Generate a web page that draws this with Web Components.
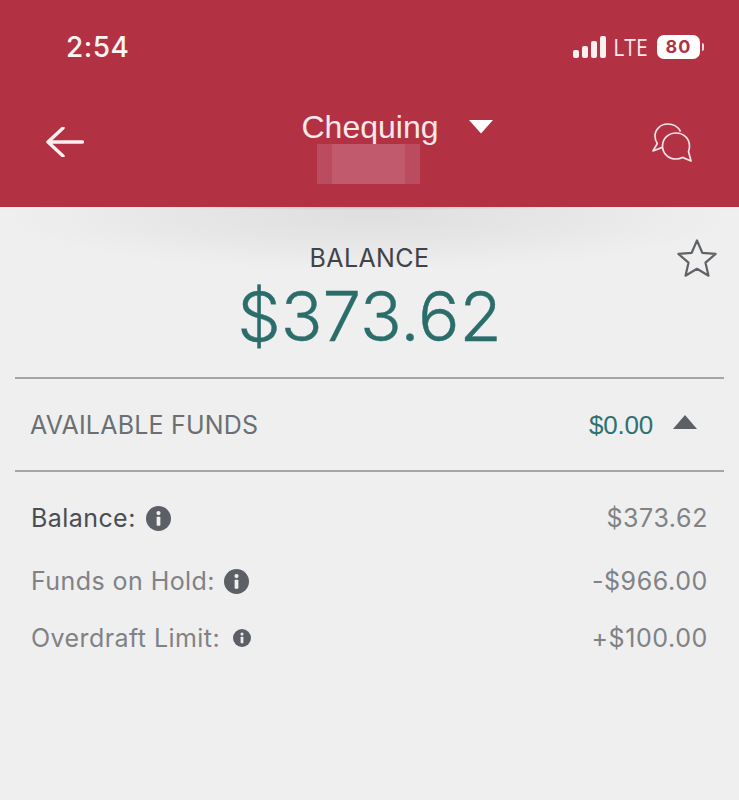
<!DOCTYPE html>
<html><head><meta charset="utf-8"><title>Chequing</title>
<style>html,body{margin:0;padding:0;background:#efeff0}body{width:739px;height:800px;overflow:hidden;font-family:"Liberation Sans",sans-serif}</style>
</head><body>
<account-screen></account-screen>
<script>
function def(name, html){
  customElements.define(name, class extends HTMLElement{
    constructor(){super();this.attachShadow({mode:'open'}).innerHTML=html;}
  });
}
def('status-bar',`<style>
:host{display:flex;align-items:center;justify-content:space-between;height:36px;padding:29px 35px 0 66px;color:#fff}
.t{font:500 28px/36px Inter,"Liberation Sans",sans-serif;letter-spacing:.5px;color:#fbf3f4}
.r{display:flex;align-items:center;gap:9px}
.l{font:500 24px/24px "Open Sans","Liberation Sans",sans-serif;color:#f8e9ea;transform:scaleX(.88);margin:0 -2px 0 -4px}
.b{display:flex;align-items:center;gap:2px}
.p{width:43px;height:24px;border-radius:7px;background:#fff;color:#b23244;font:700 18px/24px Inter,"Liberation Sans",sans-serif;text-align:center;letter-spacing:1px}
.n{width:2px;height:8px;background:#f3d8db;border-radius:0 2px 2px 0}
svg{display:block}
</style><span class="t">2:54</span><div class="r"><svg width="33" height="22" viewBox="0 0 33 22"><g fill="#fbeff0"><rect x="0" y="14" width="6" height="8" rx="2"/><rect x="9" y="10" width="6" height="12" rx="2"/><rect x="18" y="5" width="6" height="17" rx="2"/><rect x="27" y="0" width="6" height="22" rx="2"/></g></svg><span class="l">LTE</span><div class="b"><span class="p">80</span><span class="n"></span></div></div>`);
def('app-header',`<style>
:host{display:flex;align-items:flex-start;justify-content:space-between;height:141px;padding:0 47px 0 46px;background:#b23244}
.c{display:flex;flex-direction:column;align-items:center;position:relative;left:1px;margin-top:42px}
.ti{display:flex;align-items:center;gap:30px;height:38px;padding-left:56px}
.n{font:400 32px/38px "Liberation Sans",sans-serif;color:#f8e8ea}
.bl{width:103px;height:40px;margin:-2px 0 0 -1px;background:linear-gradient(90deg,#bb4b5e 0 15px,#c05a6c 15px 88px,#bb4b5e 88px)}
.back{margin-top:61px}.chat{margin-top:57px}svg{display:block}
.tri{margin-top:-1px}
</style><svg class="back" width="38" height="30" viewBox="0 0 38 30" fill="none" stroke="#fbeef0" stroke-width="3.400" stroke-linecap="round" stroke-linejoin="round"><path d="M36.500 15H2M17 1 2 15l15 14"/></svg>
<div class="c"><div class="ti"><span class="n">Chequing</span><svg class="tri" width="24" height="15" viewBox="0 0 24 15"><path d="M0 1h24L12 14.500Z" fill="#fff"/></svg></div><div class="bl"></div></div>
<svg class="chat" width="40" height="39" viewBox="0 0 40 39" fill="none" stroke="#f6e3e5" stroke-width="1.700" stroke-linejoin="round"><path d="M28.500 8.500C26 3.500 21 1 15.500 1 8.500 1 3 6.500 3 13c0 3 .8 5.500 2.300 7.500L1 28l9.300-3.600"/><path d="M36.500 28.500C37.200 26.800 37.500 25 37.500 23 37.500 15.500 31.500 10 24 10S10.500 15.500 10.500 23 16.500 36 24 36c2.300 0 4.600-.5 6.500-1.600L39 38Z"/></svg>`);
def('balance-hero',`<style>
:host{display:flex;flex-direction:column;align-items:center;height:170px;box-sizing:border-box;padding-top:36px;position:relative;background:radial-gradient(ellipse 210px 3px at 50% 0,#c8c5c6 0,rgba(200,197,198,0) 100%),radial-gradient(ellipse 360px 56px at 50% 8px,#dfdfe0 0,#e6e6e7 50%,#efeff0 100%)}
.l{font:400 25px/30px Inter,"Liberation Sans",sans-serif;color:#3f4347;letter-spacing:.4px}
.a{font:300 69px/80px Inter,"Liberation Sans",sans-serif;color:#2b6d6a;margin-top:3px;-webkit-text-stroke:.4px #2b6d6a}
svg{position:absolute;right:22px;top:32px}
</style><span class="l">BALANCE</span><span class="a">$373.62</span>
<svg width="40" height="39" viewBox="0 0 40 39" fill="none" stroke="#5f6367" stroke-width="2.200" stroke-linejoin="round"><path d="M20 1.500l5.300 12.300 13.300 1.100-10.100 8.800 3 13-11.500-6.900-11.500 6.900 3-13L1.400 14.900l13.300-1.100z"/></svg>`);
def('funds-section',`<style>
:host{display:block;margin:0 15px;border-top:2px solid #a4a5a7;border-bottom:2px solid #a4a5a7;}
.row{display:flex;align-items:center;height:91px;padding:0 27px 0 15px}
.l{flex:1;font:400 25px/30px Inter,"Liberation Sans",sans-serif;color:#6c6f72;letter-spacing:.2px}
.v{font:400 26px/30px "Liberation Sans",sans-serif;color:#2d7270;margin-right:20px;letter-spacing:-.2px}
svg{display:block;margin-top:-6px}
</style><div class="row"><span class="l">AVAILABLE FUNDS</span><span class="v">$0.00</span><svg width="24" height="14" viewBox="0 0 24 14"><path d="M12 0 24 14H0Z" fill="#5c6064"/></svg></div>`);
def('info-icon',`<style>:host{display:inline-flex}svg{display:block}</style><svg viewBox="0 0 24 24" width="100%" height="100%"><circle cx="12" cy="12" r="12" fill="#5c6066"/><circle cx="12" cy="6.800" r="2" fill="#efeff0"/><rect x="10.200" y="10.300" width="3.600" height="8.700" rx=".8" fill="#efeff0"/></svg>`);
def('detail-row',`<style>
:host{display:flex;align-items:center;justify-content:space-between;color:var(--c,#808285);font:400 25px/32px Inter,"Liberation Sans",sans-serif;letter-spacing:.43px}
.l{display:flex;align-items:center;gap:var(--g,10px)}
.v{color:#808285;letter-spacing:.6px}
</style><span class="l"><slot></slot></span><span class="v"><slot name="v"></slot></span>`);
def('account-screen',`<style>
:host{display:block}
.d{display:flex;flex-direction:column;padding:30px 31px 0 31px}
.d detail-row:nth-child(2){margin-top:31px}.d detail-row:nth-child(3){margin-top:25px}
</style><div style="background:#b23244;height:66px"><status-bar></status-bar></div><app-header></app-header><balance-hero></balance-hero><funds-section></funds-section>
<div class="d">
<detail-row style="--c:#4a4d51;--g:10px">Balance:<info-icon style="width:25px;height:25px"></info-icon><span slot="v">$373.62</span></detail-row>
<detail-row style="--g:9px">Funds on Hold:<info-icon style="width:25px;height:25px"></info-icon><span slot="v">-$966.00</span></detail-row>
<detail-row style="--g:13px">Overdraft Limit:<info-icon style="width:18px;height:18px"></info-icon><span slot="v">+$100.00</span></detail-row>
</div>`);
</script>
</body></html>
